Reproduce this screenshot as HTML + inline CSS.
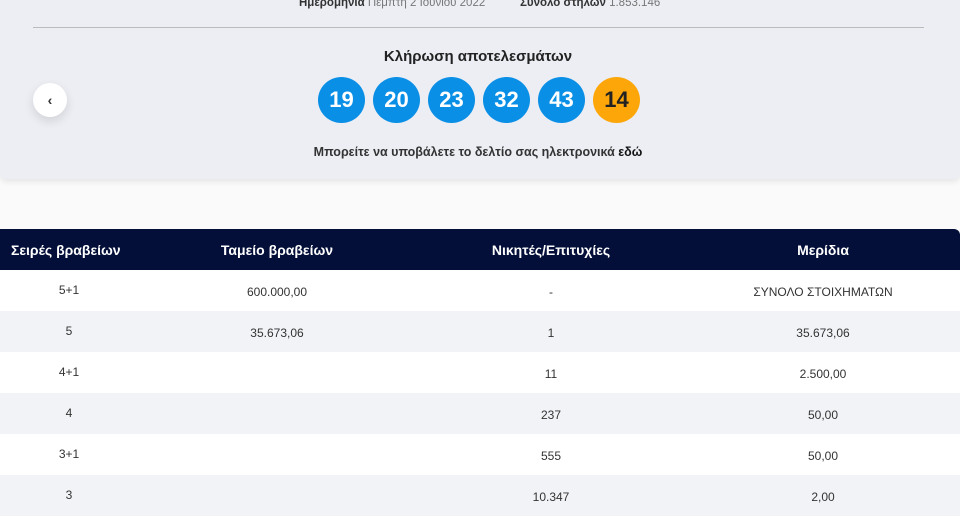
<!DOCTYPE html>
<html><head><meta charset="utf-8"><style>
*{margin:0;padding:0;box-sizing:border-box}
body{width:960px;height:508px;overflow:hidden;background:#fafafa;font-family:"Liberation Sans","DejaVu Sans",sans-serif;color:#222;position:relative}
.top{position:absolute;left:0;top:0;width:960px;height:179px;background:#eceef4;box-shadow:0 3px 6px rgba(0,0,0,.08);border-radius:0 0 6px 6px}
.meta{position:absolute;top:-3px;font-size:11.5px;color:#777;white-space:nowrap}
.meta b{color:#333}
.line{position:absolute;left:33px;width:891px;top:27px;height:1px;background:#bbb}
h2{position:absolute;top:48px;left:0;width:956px;text-align:center;font-size:15px;color:#222}
.balls{position:absolute;top:77px;left:318px;display:flex;gap:8px}
.ball{width:47px;height:46px;border-radius:50%;background:#0a8fe6;color:#fff;font-weight:bold;font-size:22px;display:flex;align-items:center;justify-content:center}
.ball.o{background:#fca60a;color:#222}
.back{position:absolute;left:33px;top:83px;width:34px;height:34px;border-radius:50%;background:#fff;box-shadow:0 4px 10px rgba(0,0,0,.12);font-size:14px;display:flex;align-items:center;justify-content:center;color:#333;font-weight:bold}
.sub{position:absolute;top:145px;left:0;width:956px;text-align:center;font-size:12.5px;color:#333;font-weight:600}
.sub b{color:#111}
table{position:absolute;top:229px;left:0;width:960px;border-collapse:collapse}
th{background:#030f38;color:#fff;height:41px;font-size:14px;font-weight:bold;text-align:center}
th:last-child{border-radius:0 6px 0 0}
td{height:41px;font-size:12px;text-align:center;color:#333;padding-top:3px}
tr:nth-child(odd) td{background:#fff}
tr:nth-child(even) td{background:#f2f3f6}
td.a{vertical-align:top;padding-top:13px}
</style></head><body>
<div class="top">
<div class="meta" style="left:299px"><b>Ημερομηνία</b> Πέμπτη 2 Ιουνίου 2022</div>
<div class="meta" style="left:520px"><b>Σύνολο στηλών</b> 1.853.146</div>
<div class="line"></div>
<h2>Κλήρωση αποτελεσμάτων</h2>
<div class="back">‹</div>
<div class="balls"><div class="ball">19</div><div class="ball">20</div><div class="ball">23</div><div class="ball">32</div><div class="ball">43</div><div class="ball o">14</div></div>
<div class="sub">Μπορείτε να υποβάλετε το δελτίο σας ηλεκτρονικά <b>εδώ</b></div>
</div>
<table>
<tr><th style="width:138px;text-align:left;padding-left:11px">Σειρές βραβείων</th><th style="width:278px">Ταμείο βραβείων</th><th style="width:270px">Νικητές/Επιτυχίες</th><th>Μερίδια</th></tr>
<tbody>
<tr><td class="a">5+1</td><td>600.000,00</td><td>-</td><td>ΣΥΝΟΛΟ ΣΤΟΙΧΗΜΑΤΩΝ</td></tr>
<tr><td class="a">5</td><td>35.673,06</td><td>1</td><td>35.673,06</td></tr>
<tr><td class="a">4+1</td><td></td><td>11</td><td>2.500,00</td></tr>
<tr><td class="a">4</td><td></td><td>237</td><td>50,00</td></tr>
<tr><td class="a">3+1</td><td></td><td>555</td><td>50,00</td></tr>
<tr><td class="a">3</td><td></td><td>10.347</td><td>2,00</td></tr>
</tbody></table>
</body></html>
